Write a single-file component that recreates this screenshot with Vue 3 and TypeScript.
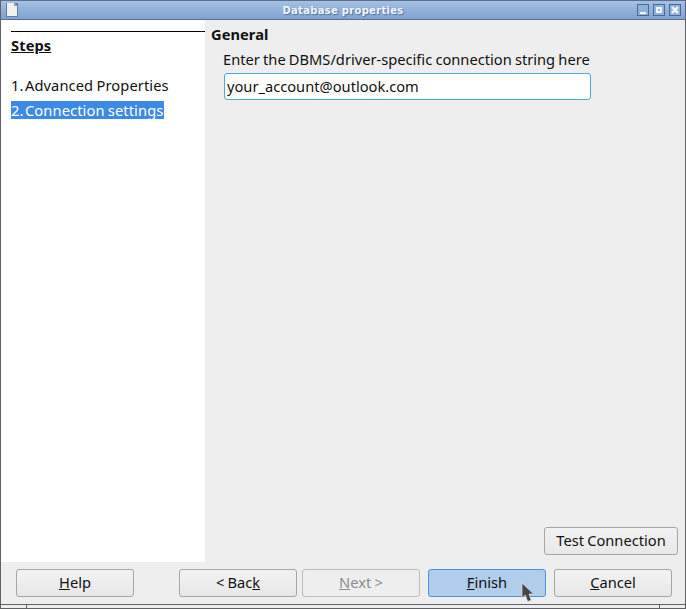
<script setup lang="ts">
const steps = [
  { num: '1.', label: 'Advanced Properties', active: false },
  { num: '2.', label: 'Connection settings', active: true },
]
</script>

<template>
  <div class="window">
    <header class="titlebar">
      <svg class="doc-icon" width="12" height="14" viewBox="0 0 12 14">
        <rect x="0" y="0" width="12" height="14" fill="#5f7da6" />
        <path d="M1 0H8L11 3V13H1Z" fill="#f1f1ef" />
        <path d="M8 0V3H11Z" fill="#9a9a9a" />
      </svg>
      <span class="title">Database properties</span>
      <div class="win-btns">
        <span class="win-btn"><i class="min"></i></span>
        <span class="win-btn"><i class="max"></i></span>
        <span class="win-btn">
          <svg width="8" height="8" viewBox="0 0 8 8"><path d="M1 1L7 7M7 1L1 7" stroke="#f2f6fb" stroke-width="2.4" /></svg>
        </span>
      </div>
    </header>

    <div class="main">
      <aside class="sidebar">
        <div class="rule"></div>
        <h2 class="steps-title">Steps</h2>
        <ul class="steps">
          <li v-for="s in steps" :key="s.num" :class="{ active: s.active }">
            <span class="num">{{ s.num }}</span>
            <span>{{ s.label }}</span>
          </li>
        </ul>
      </aside>

      <section class="page">
        <h3 class="group">General</h3>
        <label class="hint" for="conn">Enter the DBMS/driver-specific connection string here</label>
        <input id="conn" class="conn" type="text" value="your_account@outlook.com" />
        <button class="btn test">Test Connection</button>
      </section>
    </div>

    <footer class="actions">
      <button class="btn"><u>H</u>elp</button>
      <div class="nav">
        <button class="btn">&lt; Bac<u>k</u></button>
        <button class="btn" disabled><u>N</u>ext &gt;</button>
        <button class="btn primary"><u>F</u>inish</button>
        <button class="btn"><u>C</u>ancel</button>
      </div>
    </footer>

    <div class="strip"><span></span><span></span></div>

    <svg class="cursor" width="14" height="21" viewBox="0 0 14 21">
      <path d="M1 1V16L4.4 13L6.6 19.6L10.2 18.2L8 12H12.6Z" fill="#454545" stroke="#e4e4e4" stroke-width=".7" />
    </svg>
  </div>
</template>

<style>
html, body { margin: 0; background: #eeeeee; }
</style>

<style scoped>
.window {
  position: relative;
  width: 686px;
  height: 609px;
  box-sizing: border-box;
  display: flex;
  flex-direction: column;
  border-left: 1px solid #5f6368;
  border-right: 1px solid #5f6368;
  background: #eeeeee;
  color: #111;
  font-family: "Noto Sans", sans-serif;
  font-size: 14.67px;
  word-spacing: -0.6px;
  overflow: hidden;
}
.titlebar {
  position: relative;
  height: 20px;
  flex: none;
  box-sizing: border-box;
  margin: 0 -1px;
  border-top: 1px solid #5a6f90;
  border-bottom: 1px solid #54709a;
  background: linear-gradient(#a5c0e2, #7fa3d1);
  display: flex;
  align-items: center;
  justify-content: center;
}
.doc-icon { position: absolute; left: 6px; top: 2px; }
.title {
  font-family: "DejaVu Sans", sans-serif;
  font-weight: 700;
  font-size: 10px;
  color: #f2f5fa;
  letter-spacing: .3px;
  word-spacing: 0;
  text-shadow: 1px 1px 1px #56709a;
}
.win-btns { position: absolute; right: 5px; top: 3px; display: flex; gap: 4px; }
.win-btn {
  width: 12px;
  height: 12px;
  box-sizing: border-box;
  border: 1px solid #4a6a94;
  display: flex;
  align-items: center;
  justify-content: center;
  background: #8fb0da;
}
.win-btn .min { width: 6px; height: 2px; background: #f2f6fb; margin-top: 5px; }
.win-btn .max { width: 2px; height: 2px; border: 2px solid #f2f6fb; }

.main { flex: 1; display: flex; min-height: 0; }
.sidebar { width: 204px; flex: none; background: #fff; padding-top: 11px; box-sizing: border-box; }
.rule { height: 1px; background: #000; margin-left: 10px; }
.steps-title {
  margin: 3px 0 0 10px;
  font-size: 14.67px;
  line-height: 20px;
  font-weight: 700;
  letter-spacing: .1px;
  text-decoration: underline;
}
.steps { list-style: none; margin: 21px 0 0 10px; padding: 0; }
.steps li {
  display: flex;
  gap: 2px;
  width: fit-content;
  height: 18px;
  line-height: 18px;
  margin-bottom: 7px;
  padding-right: 1px;
  letter-spacing: .1px;
}
.steps li.active { background: #3d8ae6; color: #fff; }
.num { width: 12px; }

.page { flex: 1; display: flex; flex-direction: column; align-items: flex-start; padding: 5px 7px 7px 6px; min-width: 0; }
.group { margin: 0; font-size: 14.67px; line-height: 18px; font-weight: 700; letter-spacing: .05px; }
.hint { margin: 6px 0 0 12px; line-height: 20px; }
.conn {
  width: 367px;
  height: 27px;
  box-sizing: border-box;
  margin: 4px 0 0 13px;
  padding: 0 2px 1px;
  border: 1px solid #4aa8e0;
  border-radius: 3px;
  background: #fff;
  color: #111;
  font: inherit;
  word-spacing: inherit;
  outline: none;
}
.btn {
  width: 118px;
  height: 28px;
  box-sizing: border-box;
  padding: 0 0 2px;
  border: 1px solid #a6a6a6;
  border-radius: 3px;
  background: linear-gradient(#f2f2f2, #e8e8e8);
  color: #111;
  font: inherit;
  word-spacing: inherit;
}
.btn:disabled { color: #8c8c8c; background: #eeeeee; border-color: #bcbcbc; }
.btn.primary { background: #b0cdec; border-color: #4a92dc; }
.test { width: 134px; margin-top: auto; align-self: flex-end; }

.actions {
  height: 42px;
  flex: none;
  box-sizing: border-box;
  padding: 7px 13px 0 15px;
  display: flex;
  justify-content: space-between;
}
.nav { display: flex; gap: 5px; }
.nav .btn:nth-child(3) { margin-left: 3px; }
.nav .btn:nth-child(4) { margin-left: 3px; }

.strip {
  height: 5px;
  flex: none;
  margin: 0 -1px;
  border-top: 1px solid #5f6368;
  border-bottom: 1px solid #5f6368;
  background: #eeeeee;
  display: flex;
  justify-content: space-between;
  box-sizing: border-box;
  padding: 0 26px 0 26px;
}
.strip span { width: 1px; background: #5f6368; }
.cursor { position: absolute; left: 520px; top: 582px; }
</style>
